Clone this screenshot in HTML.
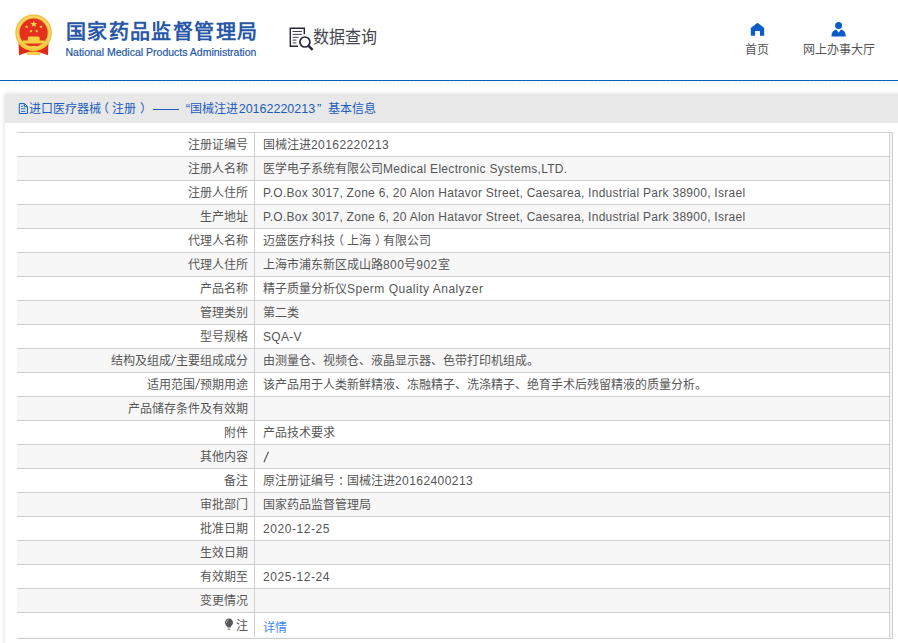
<!DOCTYPE html>
<html lang="zh-CN">
<head>
<meta charset="utf-8">
<style>
*{margin:0;padding:0;box-sizing:border-box;}
html,body{width:898px;height:643px;overflow:hidden;background:#fff;font-family:"Liberation Sans",sans-serif;}
.hdr{position:absolute;left:0;top:0;width:898px;height:80px;background:#fff;}
.line{position:absolute;left:0;top:80px;width:898px;height:1px;background:#0b5cc2;}
.dash{position:absolute;left:0;top:81px;}
.emb{position:absolute;left:0;top:0;}
.t1{position:absolute;left:65.9px;top:15.6px;font-size:20px;font-weight:bold;color:#2857a8;white-space:nowrap;letter-spacing:1.4px;}
.t2{position:absolute;left:65.5px;top:45.5px;font-size:10.5px;color:#2556a6;white-space:nowrap;-webkit-text-stroke:.2px #2556a6;}
.sq{position:absolute;left:0;top:0;}
.sqt{position:absolute;left:313px;top:22.2px;font-size:16px;transform:scaleY(1.08);transform-origin:0 0;color:#45454e;white-space:nowrap;}
.nav{position:absolute;top:40px;text-align:center;color:#555;font-size:12px;white-space:nowrap;}
.box{position:absolute;left:5px;top:94px;width:900px;height:560px;background:#fff;box-shadow:0 0 5px rgba(0,0,0,.15);}
.bar{position:absolute;left:0;top:0;width:900px;height:29px;background:#e8e8e8;border-bottom:1px solid #e9ecf5;}
.bci{position:absolute;left:13px;top:8px;}
.bc{position:absolute;left:0;top:0;font-size:12px;color:#1a5cbf;white-space:nowrap;}
.bc span{position:absolute;top:4.6px;}
.b1{left:24px;}
.b2{left:147.5px;top:15.2px!important;width:26px;height:1px;background:#1a5cbf;}
.b3{left:180.5px;}
.b4{left:323.4px;}
.tw{position:absolute;left:12px;top:38px;width:876px;border:1px solid #cfcfcf;border-left:0;padding:0 2px 1px 0;background:#f4f6fc;}
table{width:100%;border-collapse:separate;border-spacing:0;font-size:12px;color:#565656;}
td{border-right:1px solid #cfcfcf;border-bottom:1px solid #cfcfcf;height:24px;padding:0 0 3px 0;white-space:nowrap;}
tr:last-child td{border-bottom:0;height:24px;}
td{background:#fff;}
tr:nth-child(even) td{background:#f7f7f7;}
td.l{width:238px;text-align:right;padding-right:6.5px;}
td.v{padding-left:8px;}

.e{letter-spacing:.3px;}
.lo{position:relative;top:2px;}
.d{letter-spacing:.43px;}
.pl{position:relative;left:-2.7px;}
.pr{position:relative;left:3.5px;}
.sl{vertical-align:-1.3px;}
.bulb{position:absolute;left:207px;top:5.4px;}
td.rel{position:relative;padding-bottom:1px;}
</style>
</head>
<body>
<div class="hdr">
  <svg class="emb" width="60" height="60" viewBox="0 0 60 60">
    <path d="M18.6,43.5 L25,46.5 Q33.6,50.5 42.2,46.5 L48.4,43.5 L48,55.2 L41,52.8 Q33.6,56 26.2,52.8 L19,55.2 Z" fill="#e3281b"/>
    <circle cx="33.6" cy="32.7" r="18.3" fill="#eebb2c"/>
    <circle cx="33.6" cy="32.7" r="17.2" fill="#f7d565"/>
    <circle cx="33.6" cy="32.7" r="15" fill="#efc23a"/>
    <circle cx="33.6" cy="32.6" r="14.1" fill="#e6301f"/>
    <path d="M22.6,43.6 L44.6,43.6 L44.6,40.6 L39.6,40.6 L39.6,37.6 L38.8,36.6 L28.6,36.6 L27.8,37.6 L27.8,40.6 L22.6,40.6 Z" fill="#f6cf45"/>
    <path d="M19.5,41 Q25,48.5 33.6,48.5 Q42.2,48.5 47.7,41 L48.8,43.4 Q42.5,50.8 33.6,50.8 Q24.7,50.8 18.4,43.4 Z" fill="#f3c53a"/>
    <ellipse cx="33.6" cy="47.8" rx="3.4" ry="2" fill="#f7d24a"/>
    <path d="M26.4,52.6 Q33.6,50.6 40.8,52.6 L40,55.2 Q33.6,53.6 27.2,55.2 Z" fill="#f5cf45"/>
    <g fill="#f7d54a">
      <polygon points="33.8,20.4 34.7,22.9 37.3,23 35.3,24.6 36,27.1 33.8,25.6 31.6,27.1 32.3,24.6 30.3,23 32.9,22.9"/>
      <polygon points="26.7,25.1 27.2,26.2 28.4,26.3 27.5,27 27.8,28.2 26.7,27.5 25.6,28.2 25.9,27 25,26.3 26.2,26.2"/>
      <polygon points="41,25.1 41.5,26.2 42.7,26.3 41.8,27 42.1,28.2 41,27.5 39.9,28.2 40.2,27 39.3,26.3 40.5,26.2"/>
      <polygon points="31,29.4 31.5,30.5 32.7,30.6 31.8,31.3 32.1,32.5 31,31.8 29.9,32.5 30.2,31.3 29.3,30.6 30.5,30.5"/>
      <polygon points="36.7,29.4 37.2,30.5 38.4,30.6 37.5,31.3 37.8,32.5 36.7,31.8 35.6,32.5 35.9,31.3 35,30.6 36.2,30.5"/>
    </g>
  </svg>
  <div class="t1">国家药品监督管理局</div>
  <div class="t2">National Medical Products Administration</div>
  <svg class="sq" width="898" height="80" viewBox="0 0 898 80">
    <g fill="none" stroke="#262638" stroke-linecap="butt">
      <path d="M298,46.3 H290.3 V28.2 H304.3 V34.2" stroke-width="1.4"/>
      <path d="M292.6,31.5 H301.9 M292.6,34.4 H301.9 M292.6,37.3 H298.6 M292.6,40.1 H296.5 M292.6,42.9 H296.5" stroke-width="0.9"/>
      <circle cx="304.9" cy="42" r="5" stroke-width="1.7"/>
      <path d="M308.6,45.8 L312.6,49.8" stroke-width="2.4"/>
    </g>
    <path d="M750.8,27.9 L757.5,22.8 L764.2,27.9 V35.8 H760 V31 H755.1 V35.8 H750.8 Z" fill="#0a5cc8"/>
    <circle cx="838.6" cy="25.5" r="3.5" fill="#0a5cc8"/>
    <path d="M831.5,36.5 C831.5,32.5 833.5,29.8 836.6,29.8 L838.6,32.7 L840.7,29.8 C843.8,29.8 845.8,32.5 845.8,36.5 Z" fill="#0a5cc8"/>
  </svg>
  <div class="sqt">数据查询</div>
  <div class="nav" style="left:745px;">首页</div>
  <div class="nav" style="left:802.5px;">网上办事大厅</div>
</div>
<div class="line"></div>
<svg class="dash" width="898" height="4" viewBox="0 0 898 4"><defs><pattern id="dp" width="3.6" height="4" patternUnits="userSpaceOnUse"><path d="M0.6,2.9 L2.6,1.1" stroke="#d6d6d6" stroke-width="0.7"/></pattern></defs><rect width="898" height="4" fill="url(#dp)"/></svg>
<div class="box">
  <div class="bar"><div class="bc"><svg class="bci" width="12" height="14" viewBox="0 0 12 14"><path d="M1.3,1.6 H6.6 L9.4,4.4 V11.5 H1.3 Z M6.3,1.8 V4.7 H9.2" fill="none" stroke="#0b5cc0" stroke-width="1"/><path d="M3,4.3 H5 M3,6.7 H7.4 M3,9.3 H7.4" stroke="#0b5cc0" stroke-width="0.9"/></svg><span class="b1">进口医疗器械</span><span style="left:92px">（</span><span style="left:106.5px">注册</span><span style="left:134.5px">）</span><span class="b2"></span><span style="left:180.8px;font-size:13px;top:7px">“</span><span style="left:185.3px">国械注进</span><span style="left:233.7px;font-size:12.5px;top:8px">20162220213</span><span style="left:312px;font-size:13px;top:7px">”</span><span class="b4">基本信息</span></div></div>
  <div class="tw"><table>
    <tr><td class="l">注册证编号</td><td class="v">国械注进<span class="d">20162220213</span></td></tr>
    <tr><td class="l">注册人名称</td><td class="v">医学电子系统有限公司<span class="e">Medical Electronic Systems,LTD.</span></td></tr>
    <tr><td class="l">注册人住所</td><td class="v"><span class="e lo" style="letter-spacing:.27px">P.O.Box 3017, Zone 6, 20 Alon Hatavor Street, Caesarea, Industrial Park 38900, Israel</span></td></tr>
    <tr><td class="l">生产地址</td><td class="v"><span class="e lo" style="letter-spacing:.27px">P.O.Box 3017, Zone 6, 20 Alon Hatavor Street, Caesarea, Industrial Park 38900, Israel</span></td></tr>
    <tr><td class="l">代理人名称</td><td class="v">迈盛医疗科技<span class="pl">（</span>上海<span class="pr">）</span>有限公司</td></tr>
    <tr><td class="l">代理人住所</td><td class="v">上海市浦东新区成山路<span class="d">800</span>号<span class="d">902</span>室</td></tr>
    <tr><td class="l">产品名称</td><td class="v">精子质量分析仪<span class="e" style="letter-spacing:.5px">Sperm Quality Analyzer</span></td></tr>
    <tr><td class="l">管理类别</td><td class="v">第二类</td></tr>
    <tr><td class="l">型号规格</td><td class="v"><span class="e lo">SQA-V</span></td></tr>
    <tr><td class="l">结构及组成<svg class="sl" width="5" height="12"><path d="M0.4,11.4 L4.8,0.6" stroke="#555" stroke-width="1"/></svg>主要组成成分</td><td class="v">由测量仓、视频仓、液晶显示器、色带打印机组成。</td></tr>
    <tr><td class="l">适用范围<svg class="sl" width="5" height="12"><path d="M0.4,11.4 L4.8,0.6" stroke="#555" stroke-width="1"/></svg>预期用途</td><td class="v">该产品用于人类新鲜精液、冻融精子、洗涤精子、绝育手术后残留精液的质量分析。</td></tr>
    <tr><td class="l">产品储存条件及有效期</td><td class="v"></td></tr>
    <tr><td class="l">附件</td><td class="v">产品技术要求</td></tr>
    <tr><td class="l">其他内容</td><td class="v"><svg width="8" height="12" style="vertical-align:-4px;margin-left:-0.5px"><path d="M0.9,11.2 L5.5,0.8" stroke="#555" stroke-width="1.1"/></svg></td></tr>
    <tr><td class="l">备注</td><td class="v">原注册证编号<span style="position:relative;left:3.4px;top:.5px">：</span>国械注进<span class="d">20162400213</span></td></tr>
    <tr><td class="l">审批部门</td><td class="v">国家药品监督管理局</td></tr>
    <tr><td class="l">批准日期</td><td class="v"><span class="e lo" style="letter-spacing:.55px">2020-12-25</span></td></tr>
    <tr><td class="l">生效日期</td><td class="v"></td></tr>
    <tr><td class="l">有效期至</td><td class="v"><span class="e lo" style="letter-spacing:.55px">2025-12-24</span></td></tr>
    <tr><td class="l">变更情况</td><td class="v"></td></tr>
    <tr><td class="l rel"><svg class="bulb" width="10" height="13" viewBox="0 0 10 13"><path d="M5,0.6 C7.4,0.6 9,2.4 9,4.6 C9,6.4 7.8,7.4 7,8.4 L6.6,9.4 H3.4 L3,8.4 C2.2,7.4 1,6.4 1,4.6 C1,2.4 2.6,0.6 5,0.6 Z" fill="#58585c"/><path d="M2.6,5 C2.4,3.4 3.4,2 4.6,1.8" fill="none" stroke="#c9c9d2" stroke-width="0.9"/><path d="M3.8,11.2 H6.2" stroke="#6a6a70" stroke-width="1.1"/></svg>注</td><td class="v" style="color:#4489f2;padding-top:2px;padding-bottom:0">详情</td></tr>
  </table></div>
</div>
</body>
</html>
